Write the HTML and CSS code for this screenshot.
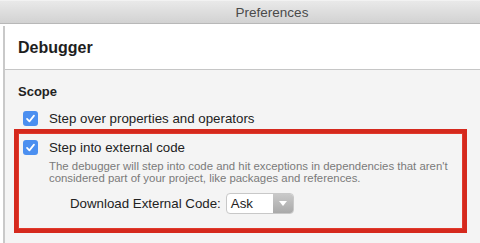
FILE: index.html
```html
<!DOCTYPE html>
<html lang="en">
<head>
  <meta charset="UTF-8">
  <title>Preferences</title>
  <link rel="stylesheet" href="styles.css">
</head>
<body>

  <!-- Window title -->
  <div class="titlebar">Preferences</div>

  <div class="window">
    <div class="edge"></div>

    <div class="panel">
      <div class="panel-header">Debugger</div>

      <div class="panel-content">
        <h3 class="section-title">Scope</h3>

        <div class="option">
          <span class="checkbox">
            <svg width="15" height="15" viewBox="0 0 15 15"><path d="M4 7.8 L6.4 10.4 L11 4.6" fill="none" stroke="#fff" stroke-width="1.7" stroke-linecap="round" stroke-linejoin="round"/></svg>
          </span>
          <span class="option-label">Step over properties and operators</span>
        </div>

        <!-- Highlighted option -->
        <div class="highlight">
          <div class="option">
            <span class="checkbox">
              <svg width="15" height="15" viewBox="0 0 15 15"><path d="M4 7.8 L6.4 10.4 L11 4.6" fill="none" stroke="#fff" stroke-width="1.7" stroke-linecap="round" stroke-linejoin="round"/></svg>
            </span>
            <span class="option-label">Step into external code</span>
          </div>
          <p class="option-desc">The debugger will step into code and hit exceptions in dependencies that aren't<br>considered part of your project, like packages and references.</p>

          <div class="download-row">
            <span class="download-label">Download External Code:</span>
            <div class="select">
              <span class="select-value">Ask</span>
              <span class="select-button">
                <svg width="8" height="5" viewBox="0 0 8 5"><path d="M0 0 H8 L4 5 Z" fill="#fff"/></svg>
              </span>
            </div>
          </div>
        </div>
      </div>
    </div>
  </div>

</body>
</html>
```

FILE: styles.css
```css
html, body {
  margin: 0;
  padding: 0;
  width: 480px;
  height: 243px;
  overflow: hidden;
  font-family: "Liberation Sans", Arial, sans-serif;
  color: #222;
  background: #fff;
}

/* Title bar */
.titlebar {
  height: 24px;
  line-height: 24px;
  padding-left: 64px;
  text-align: center;
  font-size: 13.5px;
  color: #4a4a4a;
  background: linear-gradient(#e9e9e9, #d2d2d2);
  border-top: 1px solid #f2f2f2;
  border-bottom: 1px solid #b8b8b8;
  box-sizing: border-box;
}

.window {
  display: flex;
  height: 219px;
  padding-top: 2px;
  box-sizing: border-box;
}

.edge {
  width: 3px;
  background: #fff;
}

.panel {
  flex: 1;
  display: flex;
  flex-direction: column;
  border-left: 2px solid #c9c9c9;
}

/* Header */
.panel-header {
  height: 43px;
  display: flex;
  align-items: center;
  padding-left: 13px;
  font-size: 16px;
  font-weight: bold;
  color: #1e1e1e;
  background: #fff;
  border-bottom: 1px solid #c6c6c6;
}

.panel-content {
  flex: 1;
  background: #f4f4f4;
  padding: 14px 0 0 13px;
}

.section-title {
  margin: 0 0 10px;
  font-size: 13px;
  line-height: 16px;
  font-weight: bold;
  color: #222;
}

/* Checkbox rows */
.option {
  display: flex;
  align-items: center;
  height: 16px;
  padding-left: 5px;
}

.checkbox {
  width: 15px;
  height: 15px;
  border-radius: 3px;
  background: #4b8ff0;
  display: flex;
  margin-right: 11px;
}

.option-label {
  font-size: 13.3px;
  color: #222;
}

/* Red highlight box */
.highlight {
  width: 453px;
  margin: 3px 0 0 -4px;
  padding: 6px 0 15px;
  border: 4px solid #d5291d;
  box-shadow: inset 0 0 0 1px #e0382b;
  box-sizing: border-box;
}

.highlight .option {
  padding-left: 5px;
}

.option-desc {
  margin: 5px 0 0 31px;
  font-size: 11.4px;
  line-height: 12px;
  color: #7a7a7a;
}

.download-row {
  display: flex;
  align-items: center;
  margin-top: 9px;
  padding-left: 52px;
}

.download-label {
  font-size: 13.3px;
  color: #222;
  margin-right: 5px;
}

.select {
  display: flex;
  width: 68px;
  height: 21px;
  border: 1px solid #c8c8c8;
  border-radius: 4px;
  overflow: hidden;
  box-sizing: border-box;
  background: #fff;
}

.select-value {
  flex: 1;
  padding-left: 4px;
  font-size: 13.3px;
  line-height: 19px;
  color: #222;
}

.select-button {
  width: 20px;
  display: flex;
  align-items: center;
  justify-content: center;
  background: linear-gradient(#c9c9c9, #a9a9a9);
}
```
